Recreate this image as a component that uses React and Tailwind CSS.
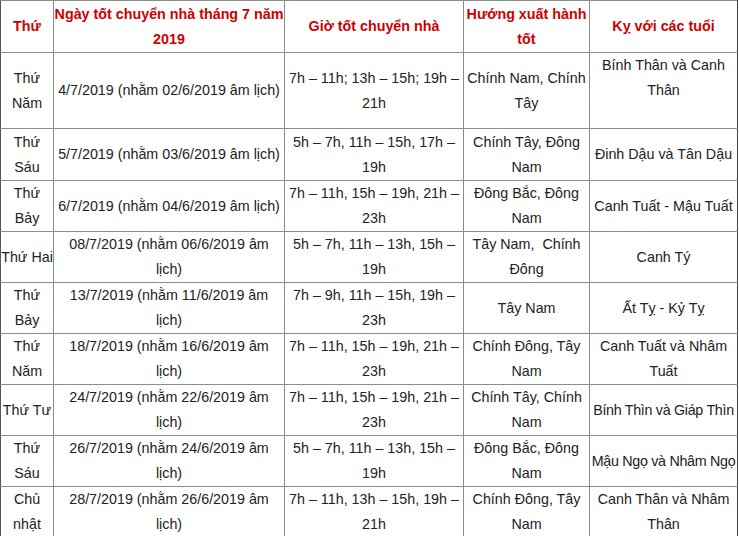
import React from 'react';

const rows = [
    {
        day: ['Thứ', 'Năm'],
        date: ['4/7/2019 (nhằm 02/6/2019 âm lịch)'],
        hours: ['7h – 11h; 13h – 15h; 19h –', '21h'],
        dir: ['Chính Nam, Chính', 'Tây'],
        avoid: ['Bính Thân và Canh', 'Thân'],
        tall: true
    },
    {
        day: ['Thứ', 'Sáu'],
        date: ['5/7/2019 (nhằm 03/6/2019 âm lịch)'],
        hours: ['5h – 7h, 11h – 15h, 17h –', '19h'],
        dir: ['Chính Tây, Đông', 'Nam'],
        avoid: ['Đinh Dậu và Tân Dậu']
    },
    {
        day: ['Thứ', 'Bảy'],
        date: ['6/7/2019 (nhằm 04/6/2019 âm lịch)'],
        hours: ['7h – 11h, 15h – 19h, 21h –', '23h'],
        dir: ['Đông Bắc, Đông', 'Nam'],
        avoid: ['Canh Tuất - Mậu Tuất']
    },
    {
        day: ['Thứ Hai'],
        date: ['08/7/2019 (nhằm 06/6/2019 âm', 'lịch)'],
        hours: ['5h – 7h, 11h – 13h, 15h –', '19h'],
        dir: ['Tây Nam,  Chính', 'Đông'],
        avoid: ['Canh Tý']
    },
    {
        day: ['Thứ', 'Bảy'],
        date: ['13/7/2019 (nhằm 11/6/2019 âm', 'lịch)'],
        hours: ['7h – 9h, 11h – 15h, 19h –', '23h'],
        dir: ['Tây Nam'],
        avoid: ['Ất Tỵ - Kỷ Tỵ']
    },
    {
        day: ['Thứ', 'Năm'],
        date: ['18/7/2019 (nhằm 16/6/2019 âm', 'lịch)'],
        hours: ['7h – 11h, 15h – 19h, 21h –', '23h'],
        dir: ['Chính Đông, Tây', 'Nam'],
        avoid: ['Canh Tuất và Nhâm', 'Tuất']
    },
    {
        day: ['Thứ Tư'],
        date: ['24/7/2019 (nhằm 22/6/2019 âm', 'lịch)'],
        hours: ['7h – 11h, 15h – 19h, 21h –', '23h'],
        dir: ['Chính Tây, Chính', 'Nam'],
        avoid: ['Bính Thìn và Giáp Thìn'],
        tight: true
    },
    {
        day: ['Thứ', 'Sáu'],
        date: ['26/7/2019 (nhằm 24/6/2019 âm', 'lịch)'],
        hours: ['5h – 7h, 11h – 13h, 15h –', '19h'],
        dir: ['Đông Bắc, Đông', 'Nam'],
        avoid: ['Mậu Ngọ và Nhâm Ngọ'],
        tight: true
    },
    {
        day: ['Chủ', 'nhật'],
        date: ['28/7/2019 (nhằm 26/6/2019 âm', 'lịch)'],
        hours: ['7h – 11h, 13h – 15h, 19h –', '21h'],
        dir: ['Chính Đông, Tây', 'Nam'],
        avoid: ['Canh Thân và Nhâm', 'Thân']
    }
];

const Lines = ({ lines }) => lines.map((line, i) => (
    <div key={i} className="whitespace-pre">{line}</div>
));

export default function App() {
    const cell = "border border-[#8c8c8c] text-center align-middle px-0 py-0";

    return (
        <div className="w-[739px] h-[536px] overflow-hidden bg-white" style={{ fontFamily: '"Liberation Sans", Arial, sans-serif' }}>
            <table className="table-fixed border-collapse w-[737px] text-[14.3px] leading-[25px] text-[#222]">
                <colgroup>
                    <col className="w-[53px]" />
                    <col className="w-[231px]" />
                    <col className="w-[179px]" />
                    <col className="w-[126px]" />
                    <col className="w-[148px]" />
                </colgroup>
                <thead>
                    {/* Header */}
                    <tr className="h-[52px] font-bold text-[#cc0000]">
                        <th className={`${cell} border-l-[#555]`}>Thứ</th>
                        <th className={cell}>Ngày tốt chuyển nhà tháng 7 năm<br />2019</th>
                        <th className={cell}>Giờ tốt chuyển nhà</th>
                        <th className={cell}>Hướng xuất hành<br />tốt</th>
                        <th className={`${cell} border-r-[#444]`}>Kỵ với các tuổi</th>
                    </tr>
                </thead>
                <tbody>
                    {rows.map((row, index) => (
                        <tr key={index} className={row.tall ? 'h-[76px]' : index === 1 ? 'h-[52px]' : 'h-[51px]'}>
                            <td className={`${cell} border-l-[#555]`}><Lines lines={row.day} /></td>
                            <td className={cell}><Lines lines={row.date} /></td>
                            <td className={cell}><Lines lines={row.hours} /></td>
                            <td className={cell}><Lines lines={row.dir} /></td>
                            <td className={`${cell} border-r-[#444] ${row.tall ? 'align-top pb-[25px]' : ''} ${row.tight ? 'tracking-[-0.3px]' : ''}`}>
                                <Lines lines={row.avoid} />
                            </td>
                        </tr>
                    ))}
                </tbody>
            </table>
        </div>
    );
}
